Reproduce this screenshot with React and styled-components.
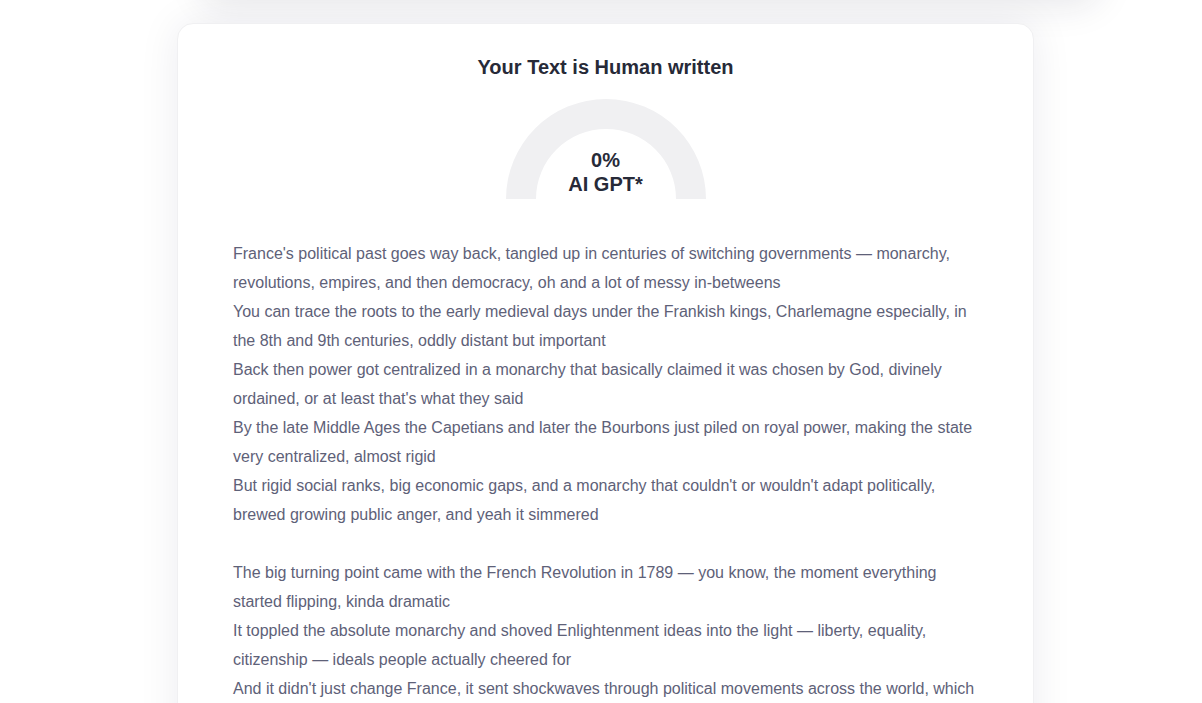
import React from 'react';
import styled, { createGlobalStyle } from 'styled-components';

const paragraphs = [
  [
    "France's political past goes way back, tangled up in centuries of switching governments — monarchy, revolutions, empires, and then democracy, oh and a lot of messy in-betweens",
    "You can trace the roots to the early medieval days under the Frankish kings, Charlemagne especially, in the 8th and 9th centuries, oddly distant but important",
    "Back then power got centralized in a monarchy that basically claimed it was chosen by God, divinely ordained, or at least that's what they said",
    "By the late Middle Ages the Capetians and later the Bourbons just piled on royal power, making the state very centralized, almost rigid",
    "But rigid social ranks, big economic gaps, and a monarchy that couldn't or wouldn't adapt politically, brewed growing public anger, and yeah it simmered",
  ],
  [
    "The big turning point came with the French Revolution in 1789 — you know, the moment everything started flipping, kinda dramatic",
    "It toppled the absolute monarchy and shoved Enlightenment ideas into the light — liberty, equality, citizenship — ideals people actually cheered for",
    "And it didn't just change France, it sent shockwaves through political movements across the world, which echoed for a long time after",
  ],
];

const GlobalStyle = createGlobalStyle`
  html, body {
    margin: 0;
    padding: 0;
    background: #ffffff;
    overflow: hidden;
  }
  body {
    font-family: "Liberation Sans", Arial, sans-serif;
  }
`;

const Page = styled.div`
  height: 703px;
  overflow: hidden;
  display: flex;
  flex-direction: column;
  align-items: center;
`;

// panel above the viewport, only its shadow shows at the top
const PrevPanel = styled.div`
  width: 900px;
  height: 200px;
  margin-top: -206px;
  margin-left: 100px;
  flex-shrink: 0;
  background: #ffffff;
  border-radius: 24px;
  box-shadow: 0 12px 36px rgba(30, 30, 60, 0.1);
`;

const Card = styled.div`
  width: 857px;
  margin-top: 29px;
  margin-left: 9px;
  flex-shrink: 0;
  box-sizing: border-box;
  background: #ffffff;
  border: 1px solid #f0f0f2;
  border-radius: 16px;
  box-shadow: 0 0 40px rgba(30, 30, 60, 0.08);
  padding: 31px 55px 40px;
  display: flex;
  flex-direction: column;
  align-items: center;
`;

const Title = styled.h2`
  margin: 0;
  font-size: 20px;
  line-height: 24px;
  font-weight: 700;
  color: #272a38;
`;

const Gauge = styled.div`
  position: relative;
  width: 200px;
  height: 100px;
  margin-top: 20px;
  display: flex;
  flex-direction: column;
  align-items: center;
  justify-content: flex-end;
  padding-bottom: 3px;
  box-sizing: border-box;

  svg {
    position: absolute;
    left: 0;
    top: 0;
  }
`;

const GaugeLabel = styled.div`
  position: relative;
  font-size: 20px;
  line-height: 24px;
  font-weight: 700;
  color: #272a38;
  text-align: center;
`;

const Body = styled.div`
  align-self: stretch;
  margin-top: 40px;
`;

const Paragraph = styled.p`
  margin: 0 0 29px;
  font-size: 16px;
  line-height: 29px;
  color: #5e6178;
`;

const Line = styled.span`
  display: block;
`;

function App() {
  return (
    <>
      <GlobalStyle />
      <Page>
        <PrevPanel />
        <Card>
          <Title>Your Text is Human written</Title>
          <Gauge>
            <svg width="200" height="100" viewBox="0 0 200 100">
              <path d="M 0 100 A 100 100 0 0 1 200 100 L 170 100 A 70 70 0 0 0 30 100 Z" fill="#f0f0f2" />
            </svg>
            <GaugeLabel>0%</GaugeLabel>
            <GaugeLabel>AI GPT*</GaugeLabel>
          </Gauge>
          <Body>
            {paragraphs.map((lines, i) => (
              <Paragraph key={i}>
                {lines.map((l, j) => (
                  <Line key={j}>{l}</Line>
                ))}
              </Paragraph>
            ))}
          </Body>
        </Card>
      </Page>
    </>
  );
}

export default App;
